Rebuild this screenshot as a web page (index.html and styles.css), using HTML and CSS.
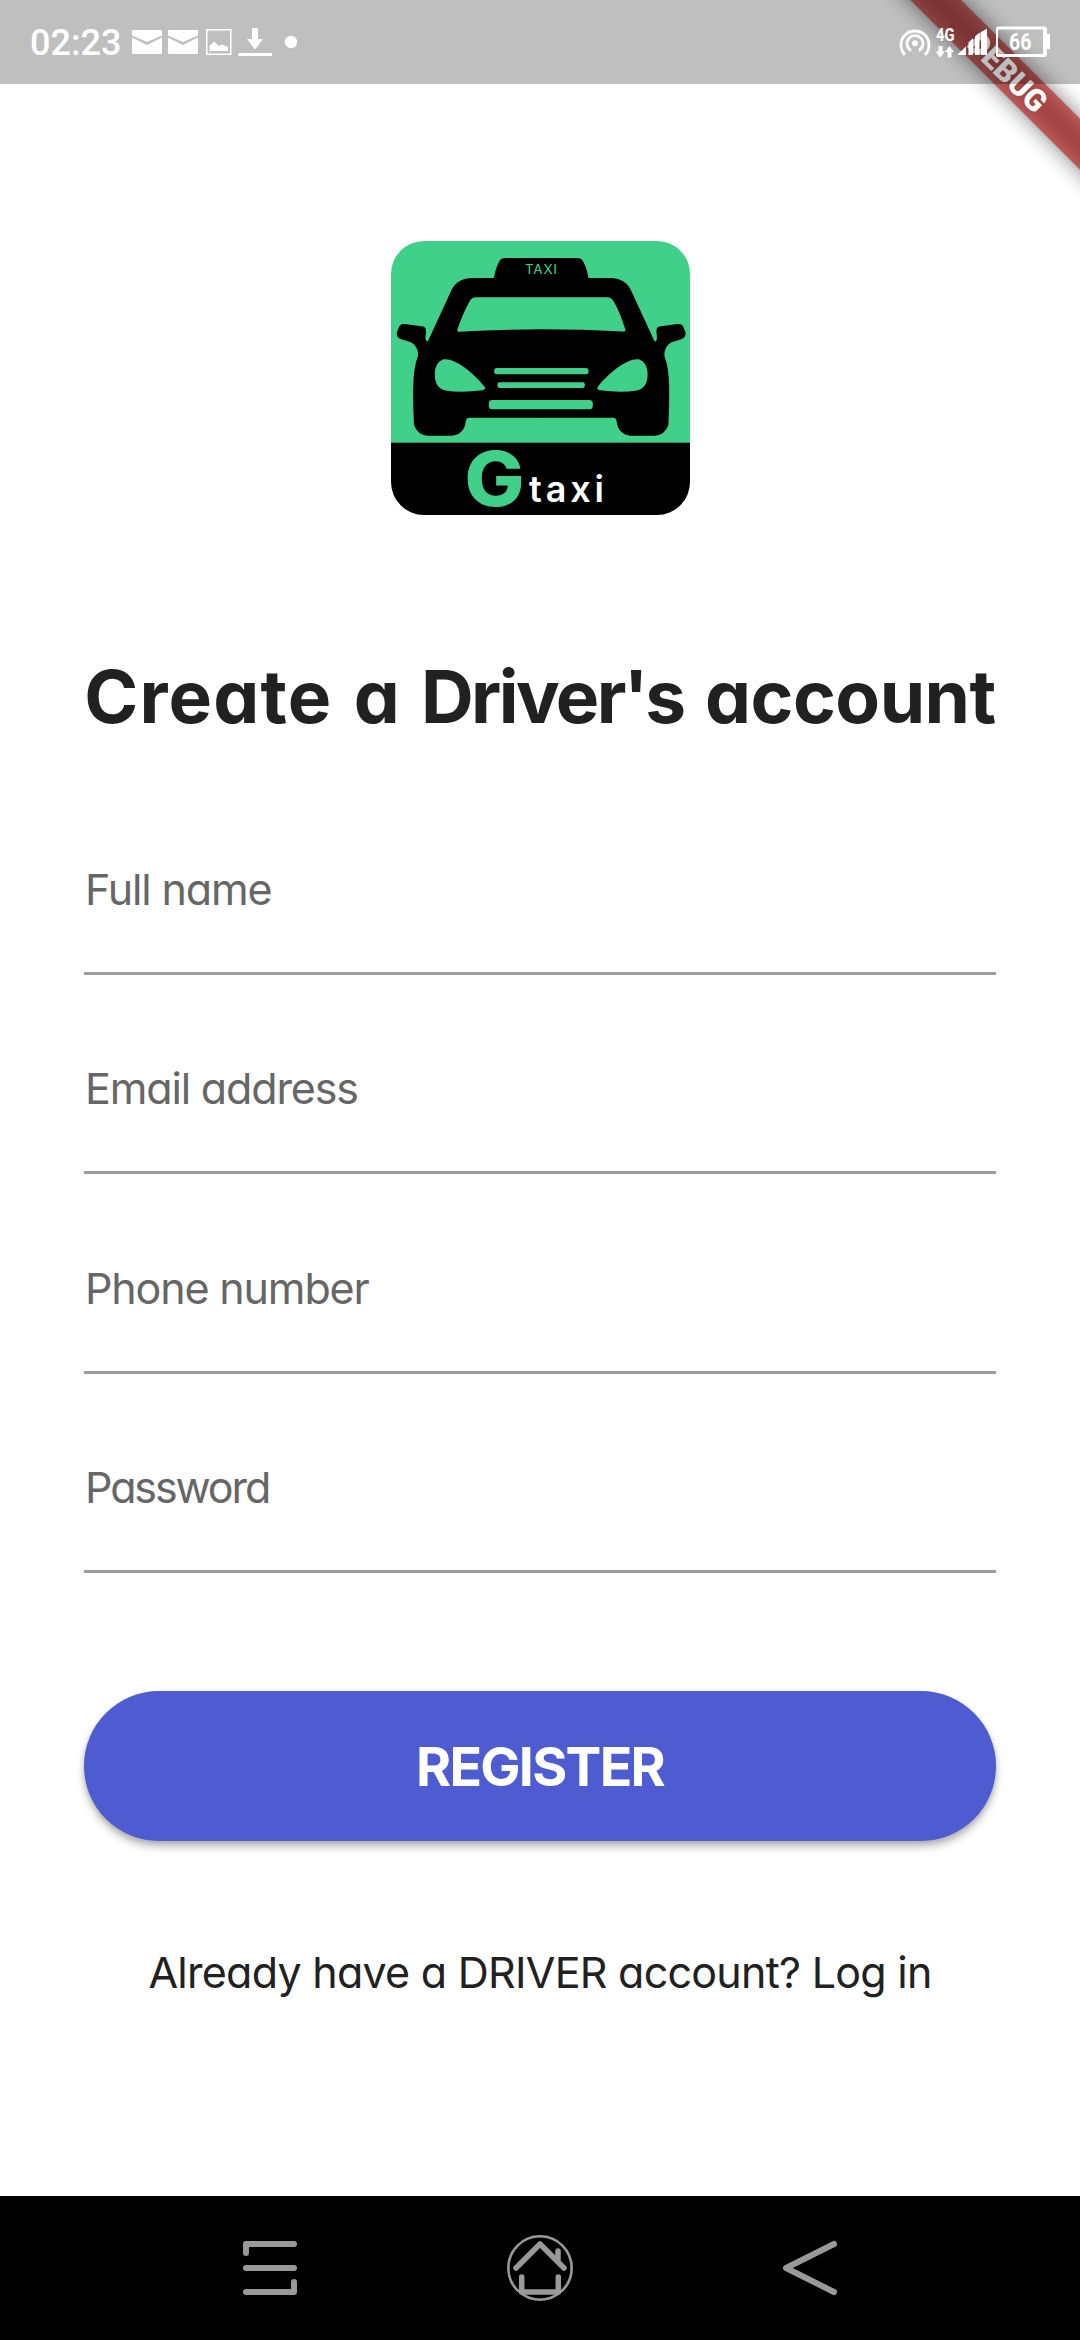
FILE: index.html
```html
<!DOCTYPE html>
<html lang="en">
<head>
<meta charset="utf-8">
<title>Create a Driver's account</title>
<link rel="stylesheet" href="styles.css">
</head>
<body>
<div class="screen">
  <svg class="debug-banner" viewBox="880 0 200 200" aria-hidden="true">
    <defs><filter id="soft" x="-20%" y="-200%" width="140%" height="500%"><feGaussianBlur stdDeviation="10.5"/></filter></defs>
    <g transform="translate(1080 0) rotate(45)">
      <rect x="-180" y="84" width="360" height="36" fill="#000" opacity=".5" filter="url(#soft)"/>
      <rect x="-180" y="84" width="360" height="36" fill="#b71c1c" fill-opacity=".627"/>
      <text class="debug-text" x="0" y="113" text-anchor="middle">DEBUG</text>
    </g>
  </svg>

  <header class="status-bar">
    <div class="status-left">
      <span class="clock">02:23</span>
      <svg class="status-icons" viewBox="130 24 170 36" width="170" height="36" fill="#fff">
        <g id="mail"><path d="M133 30h28q1 0 1 1v4.500L147 42 132 35.500V31q0-1 1-1z"/><path d="M132 37.500L147 45l15-7.500V53q0 1-1 1h-28q-1 0-1-1z"/></g>
        <use href="#mail" x="36"/>
        <path d="M206 29h25.500v26H206zm1.500 1.500v23h22.500v-23z" fill-rule="evenodd"/>
        <path d="M209.500 51v-5l4.500-4.500 5 4.500 3-1.500 6 2.500v4z"/>
        <path d="M252 28h6v11h5l-8 10.500-8-10.500h5zM238.500 53h33.500v3h-33.500z"/>
        <circle cx="291" cy="42" r="6.200"/>
      </svg>
    </div>
    <svg class="status-right" viewBox="896 20 158 44" width="158" height="44" fill="#fff">
      <circle cx="915" cy="43.300" r="3"/>
      <g fill="none" stroke="#fff" stroke-width="2.800">
        <path d="M911 50.500a8 8 0 1 1 8 0"/>
        <path d="M905 54.800a14 14 0 1 1 20 0"/>
      </g>
      <text class="net" x="936" y="41" textLength="18.500" lengthAdjust="spacingAndGlyphs">4G</text>
      <path d="M938.500 46h4v5.500h2.500l-4.800 6-4.700-6h3zM947.500 57.500v-5.500H945l4.500-6 4.500 6h-2.500v5.500z"/>
      <path d="M957 55l9-8.500V55zM968.500 55V42.500l4.500-4.500V55zM975 55V36.500l4.500-4V55zM981 55V32.500l6-4V55z"/>
      <path d="M998 26.500h46a3 3 0 0 1 3 3v4.500h3v15h-3v5a3 3 0 0 1-3 3h-46a2 2 0 0 1-2-2V28.500a2 2 0 0 1 2-2zm1 3a1 1 0 0 0-1 1v22.500a1 1 0 0 0 1 1h43a1 1 0 0 0 1-1V30.500a1 1 0 0 0-1-1z" fill-rule="evenodd"/>
      <text class="battery" x="1009" y="50" textLength="22.500" lengthAdjust="spacingAndGlyphs">66</text>
    </svg>
  </header>

  <main class="content">
    <svg class="logo" viewBox="390.500 241 299 274" width="299" height="274" role="img" aria-label="G taxi">
      <defs>
        <clipPath id="badge"><rect x="390.500" y="241" width="299" height="274" rx="33"/></clipPath>
        <path id="half" d="M541 258H505Q500.500 258 499 261Q495 268 493.500 278H472Q457 278 451 290L428 340Q427 342.500 425.500 340.500Q424.500 339 425.500 332V330Q425 326.500 421 326.300L404 324Q400.500 323.500 399 326L396.500 332Q395.500 337 400 339L411 342.500Q418 347 417.500 356Q413 367 412.700 388Q412.500 408 413.500 425Q417 435 427 435.700H452Q464 434 465.300 421Q465.500 418 469 417.700H541z"/>
        <path id="lamp" d="M434.300 374Q434.500 362 443 359.300C453 357.500 472 371 484.300 387Q485.500 389.500 482 390.200Q461 393 445 390.500Q434 388 434.300 374z"/>
      </defs>
      <g clip-path="url(#badge)">
        <rect x="390" y="241" width="300" height="202" fill="#41d08a"/>
        <rect x="390" y="442.700" width="300" height="73"/>
        <use href="#half"/><use href="#half" transform="matrix(-1 0 0 1 1081.400 0)"/>
        <g fill="#41d08a">
          <path d="M475 297.300H607Q611 297.300 613.500 302Q619 311 625 330Q625 332 622 331.500Q541 327 459 331.700Q456 332 457 329Q463 312 469 301.500Q471.500 297.300 475 297.300z"/>
          <use href="#lamp"/><use href="#lamp" transform="matrix(-1 0 0 1 1081.400 0)"/>
          <rect x="493.700" y="368" width="94.300" height="6.300" rx="2.500"/>
          <rect x="497" y="382.300" width="87.300" height="5.700" rx="2"/>
          <rect x="488.300" y="400" width="104" height="9.300" rx="3.500"/>
        </g>
      </g>
      <text class="sign" x="524.500" y="273.700" textLength="32">TAXI</text>
      <text class="logo-g" x="464" y="505.500" textLength="60" lengthAdjust="spacingAndGlyphs">G</text>
      <text class="logo-taxi" x="528.500" y="501.500" textLength="75">taxi</text>
    </svg>

    <h1 class="title"><span class="t-create">Create</span> a <span class="t-driver">Driver's</span> <span class="t-account">account</span></h1>

    <form class="form">
      <label class="field">Full name</label>
      <label class="field">Email address</label>
      <label class="field">Phone number</label>
      <label class="field field-password">Password</label>
      <button class="register" type="button">REGISTER</button>
    </form>

    <p class="login">Already have a DRIVER account? Log in</p>
  </main>

  <nav class="nav-bar">
    <svg viewBox="243 2232 54 72" width="54" height="72" fill="none" stroke="#999" stroke-width="6" stroke-linecap="round" stroke-linejoin="round">
      <path d="M246 2253v-9h48M246 2268h48M246 2292h48v-10"/>
    </svg>
    <svg viewBox="504 2232 72 72" width="72" height="72" fill="none" stroke="#999" stroke-width="5.500" stroke-linecap="round" stroke-linejoin="round">
      <circle cx="540" cy="2268" r="31.700" stroke-width="2.600"/>
      <path d="M516 2268l24-24 24 24M558 2251v10M521.700 2277v15h36.600v-15"/>
    </svg>
    <svg viewBox="783 2232 54 72" width="54" height="72" fill="none" stroke="#999" stroke-width="6" stroke-linecap="round" stroke-linejoin="round">
      <path d="M834 2244l-48 24 48 24"/>
    </svg>
  </nav>
</div>
</body>
</html>
```
FILE: styles.css
```css
* { box-sizing: border-box; }
body { margin: 0; background: #fff; }

.screen {
  position: relative;
  display: flex;
  flex-direction: column;
  width: 1080px;
  height: 2340px;
  overflow: hidden;
  background: #fff;
  color: #212121;
  font-family: Inter, "Liberation Sans", sans-serif;
  font-feature-settings: "cv11" 1;
}

.debug-banner {
  position: absolute;
  top: 0;
  right: 0;
  width: 200px;
  height: 200px;
}
.debug-text { font: 900 30.6px Roboto, sans-serif; fill: #fff; }

.status-bar {
  position: relative;
  display: flex;
  justify-content: space-between;
  height: 84px;
  padding: 20px 26px 0 30px;
  background: rgba(0, 0, 0, .25);
  color: #fff;
  font-family: Roboto, sans-serif;
}
.status-left { display: flex; gap: 9px; }
.clock { width: 91px; font-size: 36px; font-weight: 500; line-height: 46px; white-space: nowrap; }
.status-icons { margin-top: 4px; }
.net { font: 700 19px Roboto, sans-serif; }
.battery { font: 700 24px Roboto, sans-serif; }

.content {
  display: flex;
  flex: 1;
  flex-direction: column;
  align-items: center;
  padding: 157px 84px 0;
}
.logo { display: block; overflow: visible; }
.sign { font: 400 13.5px Inter, sans-serif; fill: #41d08a; }
.logo-g { font: 800 75px Inter, sans-serif; fill: #41d08a; }
.logo-taxi { font: 600 36px Inter, sans-serif; font-feature-settings: "cv11" 0; fill: #fff; }

.title {
  margin: 132px 0 0;
  font-size: 73px;
  font-weight: 700;
  line-height: 100px;
  word-spacing: 4px;
  white-space: nowrap;
}
.t-create { letter-spacing: 1.2px; }
.t-driver { letter-spacing: -2.6px; }
.t-account { letter-spacing: -.5px; }

.form { display: flex; flex-direction: column; width: 912px; margin-top: 28.6px; }
.field {
  height: 199.4px;
  padding: 83.5px 0 0 1px;
  border-bottom: 3px solid #9c9c9c;
  color: #666;
  font-size: 43px;
  line-height: 60px;
  letter-spacing: -1.15px;
}
.field-password { letter-spacing: -2.1px; }
.register {
  height: 150px;
  margin-top: 118px;
  padding: 2px 0 0;
  border: 0;
  border-radius: 75px;
  background: #4f5bd0;
  box-shadow: 0 6px 9px rgba(0, 0, 0, .24), 0 2px 5px rgba(0, 0, 0, .14);
  color: #fff;
  font: 700 53.6px/60px Inter, sans-serif;
  letter-spacing: -1.7px;
}
.login { margin: 101px 0 0; font-size: 43px; line-height: 60px; letter-spacing: -.74px; white-space: nowrap; }

.nav-bar {
  display: flex;
  flex: none;
  align-items: center;
  justify-content: space-between;
  height: 144px;
  padding: 0 243px;
  background: #000;
}
```
